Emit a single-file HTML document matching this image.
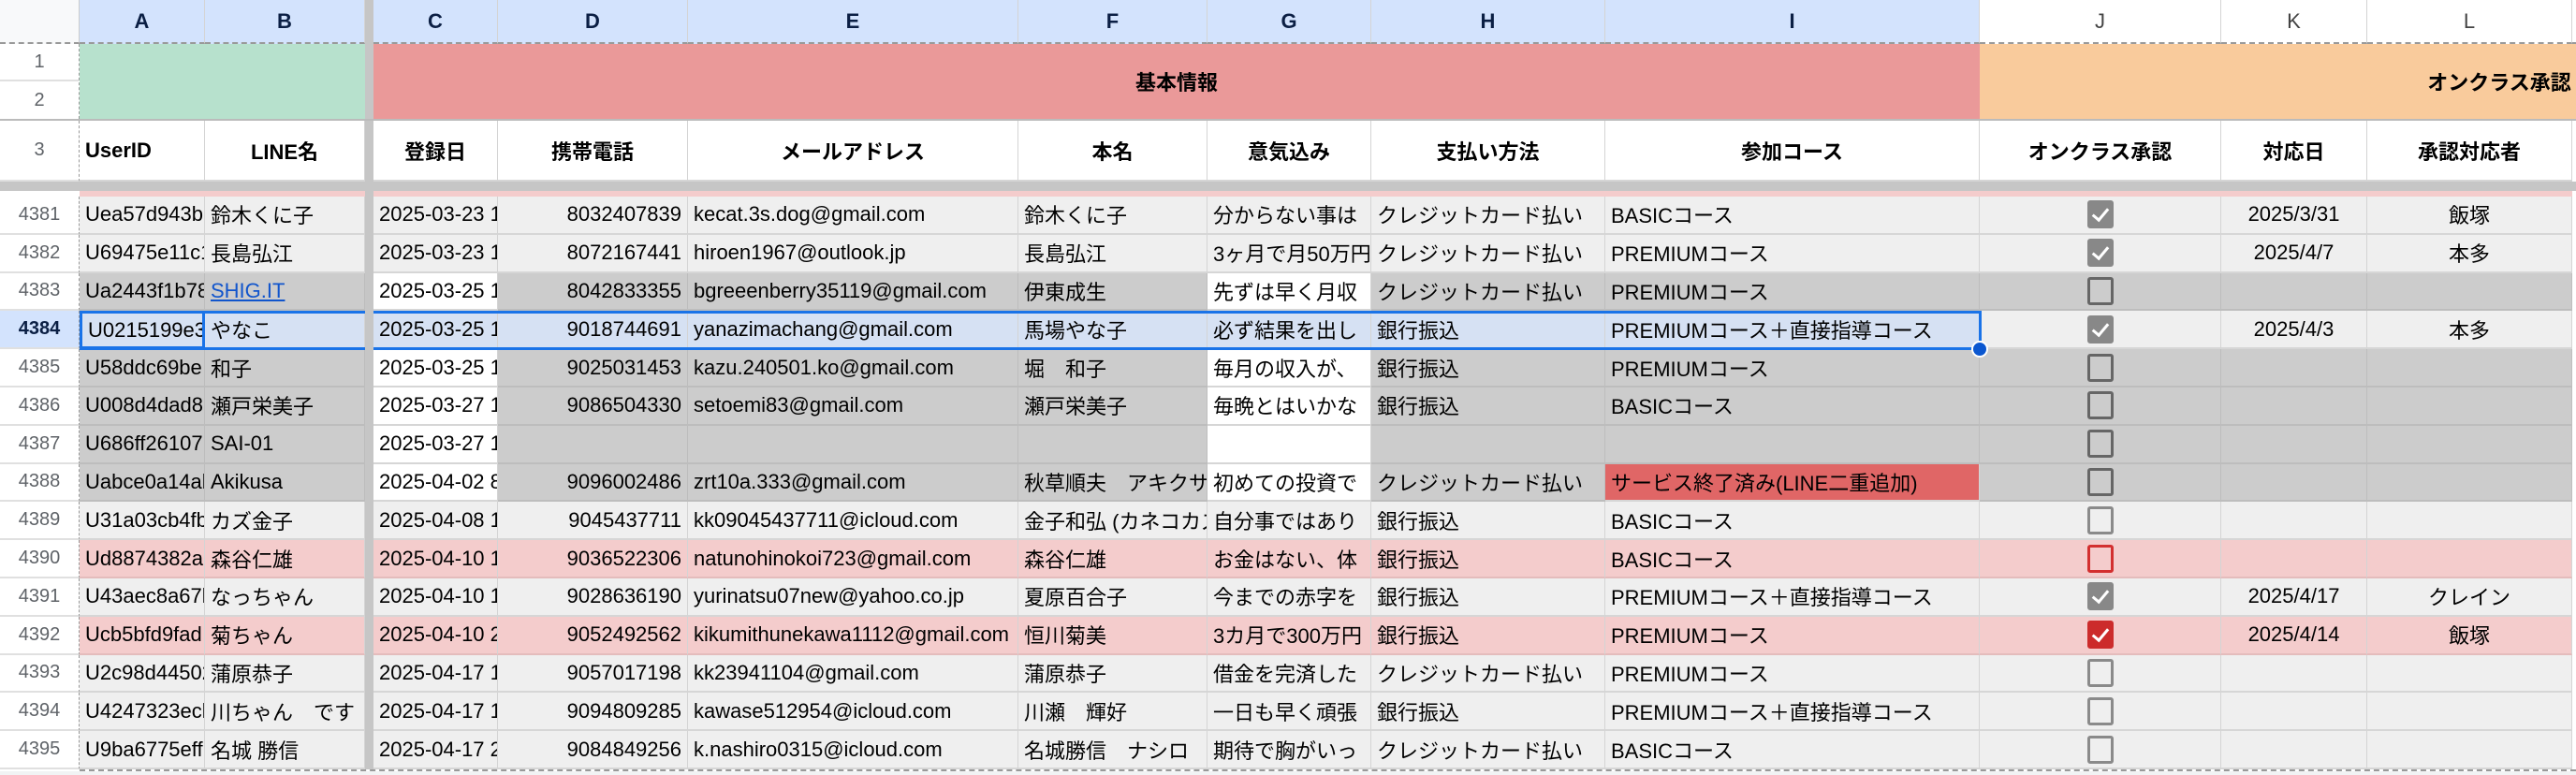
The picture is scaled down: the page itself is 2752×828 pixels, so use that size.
<!DOCTYPE html>
<html><head><meta charset="utf-8"><style>
*{box-sizing:border-box;margin:0;padding:0}
body{width:2752px;height:828px;overflow:hidden;background:#fff;font-family:"Liberation Sans","Noto Sans CJK JP",sans-serif;font-size:22px;color:#000;position:relative}
.r{position:absolute;left:0;width:2752px;display:grid;grid-template-columns:85px 134px 171px 9px 133px 203px 353px 202px 175px 250px 400px 258px 156px 219px 4px}
.r>div{overflow:hidden;white-space:nowrap;border-right:1px solid #d4d4d4;border-bottom:2px solid #d6d6d6;padding:0 6px;display:flex;align-items:center}
.r>div.n{justify-content:center;color:#5f6368;background:#fff;font-size:20px;border-right:1px dashed #999;border-bottom:2px solid #e0e0e0}
.r>div.fz{background:#c6c6c6;border:none;padding:0}
.r>div.e{background:#fff;border:none}
.w{background:#fff}.l{background:#efefef}.g{background:#cccccc;border-bottom-color:#bdbdbd!important;border-right-color:#bdbdbd!important}.p{background:#f4cccc;border-bottom-color:#e4bcbc!important}.s{background:#d6e1f3}.rd{background:#e06666}
.rt{justify-content:flex-end}.c{justify-content:center}
.d{height:40.8px}
.cb{width:28px;height:30px;border:3px solid #8a8a8a;border-radius:3px;margin:auto}
.g .cb{border-color:#666}
.cb.x{background:#888;border-color:#888;position:relative}
.cb.x::after{content:"";position:absolute;left:6px;top:2px;width:7px;height:14px;border:solid #fff;border-width:0 3px 3px 0;transform:rotate(40deg)}
.cb.red{border-color:#d32f2f}
.cb.rx{background:#cc2b2b;border-color:#cc2b2b;position:relative}
.cb.rx::after{content:"";position:absolute;left:6px;top:2px;width:7px;height:14px;border:solid #fff;border-width:0 3px 3px 0;transform:rotate(40deg)}
.hd>div{font-weight:bold;justify-content:center}
a{color:#1155cc;text-decoration:underline}
</style></head><body>

<!-- column letters -->
<div class="r" style="top:0;height:47px">
<div style="background:#f8f9fa;border-bottom:2px dashed #999;border-right:1px solid #ccc"></div>
<div class="c" style="background:#d3e3fd;font-weight:bold;color:#0b1f44;border-bottom:2px dashed #999">A</div>
<div class="c" style="background:#d3e3fd;font-weight:bold;color:#0b1f44;border-bottom:2px dashed #999">B</div>
<div class="fz"></div>
<div class="c" style="background:#d3e3fd;font-weight:bold;color:#0b1f44;border-bottom:2px dashed #999">C</div>
<div class="c" style="background:#d3e3fd;font-weight:bold;color:#0b1f44;border-bottom:2px dashed #999">D</div>
<div class="c" style="background:#d3e3fd;font-weight:bold;color:#0b1f44;border-bottom:2px dashed #999">E</div>
<div class="c" style="background:#d3e3fd;font-weight:bold;color:#0b1f44;border-bottom:2px dashed #999">F</div>
<div class="c" style="background:#d3e3fd;font-weight:bold;color:#0b1f44;border-bottom:2px dashed #999">G</div>
<div class="c" style="background:#d3e3fd;font-weight:bold;color:#0b1f44;border-bottom:2px dashed #999">H</div>
<div class="c" style="background:#d3e3fd;font-weight:bold;color:#0b1f44;border-bottom:2px dashed #999">I</div>
<div class="c" style="background:#fff;color:#444;border-bottom:2px dashed #999">J</div>
<div class="c" style="background:#fff;color:#444;border-bottom:2px dashed #999">K</div>
<div class="c" style="background:#fff;color:#444;border-bottom:2px dashed #999">L</div>
<div class="e" style="border-bottom:2px dashed #999"></div>
</div>

<!-- rows 1-2 -->
<div style="position:absolute;top:47px;left:0;width:85px;height:80px;background:#fff;border-right:1px dashed #999;color:#5f6368;font-size:20px">
<div style="height:40px;border-bottom:2px solid #e0e0e0;display:flex;align-items:center;justify-content:center">1</div>
<div style="height:40px;display:flex;align-items:center;justify-content:center">2</div></div>
<div style="position:absolute;top:47px;left:85px;width:305px;height:80px;background:#b7e1cd"></div>
<div style="position:absolute;top:47px;left:390px;width:9px;height:163px;background:#c6c6c6"></div>
<div style="position:absolute;top:47px;left:399px;width:1716px;height:80px;background:#ea9999;display:flex;align-items:center;justify-content:center;font-weight:bold">基本情報</div>
<div style="position:absolute;top:47px;left:2115px;width:637px;height:80px;background:#f9cb9c"></div>
<div style="position:absolute;top:47px;left:2530px;width:280px;height:80px;display:flex;align-items:center;justify-content:center;font-weight:bold">オンクラス承認</div>

<!-- row 3 -->
<div class="r hd" style="top:127px;height:67px;border-top:2px solid #bbb">
<div class="n" style="font-weight:normal">3</div><div class="w" style="justify-content:flex-start">UserID</div><div class="w">LINE名</div><div class="fz"></div><div class="w">登録日</div><div class="w">携帯電話</div><div class="w">メールアドレス</div><div class="w">本名</div><div class="w">意気込み</div><div class="w">支払い方法</div><div class="w">参加コース</div><div class="w">オンクラス承認</div><div class="w">対応日</div><div class="w">承認対応者</div><div class="e"></div>
</div>
<div style="position:absolute;top:194px;left:0;width:2752px;height:10px;background:#c6c6c6"></div>
<div style="position:absolute;top:204px;left:85px;width:2663px;height:6px;background:#f4cccc"></div>
<div style="position:absolute;top:204px;left:390px;width:9px;height:6px;background:#c6c6c6"></div>

<div style="position:absolute;top:210px;left:0;width:2752px">
<div class="r d" style="position:relative"><div class="n">4381</div><div class="l">Uea57d943b</div><div class="l">鈴木くに子</div><div class="fz"></div><div class="l">2025-03-23 1</div><div class="l rt">8032407839</div><div class="l">kecat.3s.dog@gmail.com</div><div class="l">鈴木くに子</div><div class="l">分からない事は</div><div class="l">クレジットカード払い</div><div class="l">BASICコース</div><div class="l"><span class="cb x"></span></div><div class="l c">2025/3/31</div><div class="l c">飯塚</div><div class="e"></div></div>
<div class="r d" style="position:relative"><div class="n">4382</div><div class="l">U69475e11c1</div><div class="l">長島弘江</div><div class="fz"></div><div class="l">2025-03-23 1</div><div class="l rt">8072167441</div><div class="l">hiroen1967@outlook.jp</div><div class="l">長島弘江</div><div class="l">3ヶ月で月50万円</div><div class="l">クレジットカード払い</div><div class="l">PREMIUMコース</div><div class="l"><span class="cb x"></span></div><div class="l c">2025/4/7</div><div class="l c">本多</div><div class="e"></div></div>
<div class="r d" style="position:relative"><div class="n">4383</div><div class="g">Ua2443f1b78</div><div class="g"><a>SHIG.IT</a></div><div class="fz"></div><div class="w">2025-03-25 1</div><div class="g rt">8042833355</div><div class="g">bgreeenberry35119@gmail.com</div><div class="g">伊東成生</div><div class="w">先ずは早く月収</div><div class="g">クレジットカード払い</div><div class="g">PREMIUMコース</div><div class="g"><span class="cb"></span></div><div class="g"></div><div class="g"></div><div class="e"></div></div>
<div class="r d" style="position:relative"><div class="n" style="background:#d3e3fd;color:#0b1f44;font-weight:bold">4384</div><div class="s" style="border:3px solid #1a73e8">U0215199e3</div><div class="s">やなこ</div><div class="fz"></div><div class="s">2025-03-25 1</div><div class="s rt">9018744691</div><div class="s">yanazimachang@gmail.com</div><div class="s">馬場やな子</div><div class="s">必ず結果を出し</div><div class="s">銀行振込</div><div class="s">PREMIUMコース＋直接指導コース</div><div class="l"><span class="cb x"></span></div><div class="l c">2025/4/3</div><div class="l c">本多</div><div class="e"></div></div>
<div class="r d" style="position:relative"><div class="n">4385</div><div class="g">U58ddc69be</div><div class="g">和子</div><div class="fz"></div><div class="w">2025-03-25 1</div><div class="g rt">9025031453</div><div class="g">kazu.240501.ko@gmail.com</div><div class="g">堀　和子</div><div class="w">毎月の収入が、</div><div class="g">銀行振込</div><div class="g">PREMIUMコース</div><div class="g"><span class="cb"></span></div><div class="g"></div><div class="g"></div><div class="e"></div></div>
<div class="r d" style="position:relative"><div class="n">4386</div><div class="g">U008d4dad8</div><div class="g">瀬戸栄美子</div><div class="fz"></div><div class="w">2025-03-27 1</div><div class="g rt">9086504330</div><div class="g">setoemi83@gmail.com</div><div class="g">瀬戸栄美子</div><div class="w">毎晩とはいかな</div><div class="g">銀行振込</div><div class="g">BASICコース</div><div class="g"><span class="cb"></span></div><div class="g"></div><div class="g"></div><div class="e"></div></div>
<div class="r d" style="position:relative"><div class="n">4387</div><div class="g">U686ff26107</div><div class="g">SAI-01</div><div class="fz"></div><div class="w">2025-03-27 1</div><div class="g"></div><div class="g"></div><div class="g"></div><div class="w"></div><div class="g"></div><div class="g"></div><div class="g"><span class="cb"></span></div><div class="g"></div><div class="g"></div><div class="e"></div></div>
<div class="r d" style="position:relative"><div class="n">4388</div><div class="g">Uabce0a14al</div><div class="g">Akikusa</div><div class="fz"></div><div class="w">2025-04-02 8</div><div class="g rt">9096002486</div><div class="g">zrt10a.333@gmail.com</div><div class="g">秋草順夫　アキクサ</div><div class="w">初めての投資で</div><div class="g">クレジットカード払い</div><div class="rd">サービス終了済み(LINE二重追加)</div><div class="g"><span class="cb"></span></div><div class="g"></div><div class="g"></div><div class="e"></div></div>
<div class="r d" style="position:relative"><div class="n">4389</div><div class="l">U31a03cb4fb</div><div class="l">カズ金子</div><div class="fz"></div><div class="l">2025-04-08 1</div><div class="l rt">9045437711</div><div class="l">kk09045437711@icloud.com</div><div class="l">金子和弘 (カネコカズ</div><div class="l">自分事ではあり</div><div class="l">銀行振込</div><div class="l">BASICコース</div><div class="l"><span class="cb"></span></div><div class="l"></div><div class="l"></div><div class="e"></div></div>
<div class="r d" style="position:relative"><div class="n">4390</div><div class="p">Ud8874382a</div><div class="p">森谷仁雄</div><div class="fz"></div><div class="p">2025-04-10 1</div><div class="p rt">9036522306</div><div class="p">natunohinokoi723@gmail.com</div><div class="p">森谷仁雄</div><div class="p">お金はない、体</div><div class="p">銀行振込</div><div class="p">BASICコース</div><div class="p"><span class="cb red"></span></div><div class="p"></div><div class="p"></div><div class="e"></div></div>
<div class="r d" style="position:relative"><div class="n">4391</div><div class="l">U43aec8a67l</div><div class="l">なっちゃん</div><div class="fz"></div><div class="l">2025-04-10 1</div><div class="l rt">9028636190</div><div class="l">yurinatsu07new@yahoo.co.jp</div><div class="l">夏原百合子</div><div class="l">今までの赤字を</div><div class="l">銀行振込</div><div class="l">PREMIUMコース＋直接指導コース</div><div class="l"><span class="cb x"></span></div><div class="l c">2025/4/17</div><div class="l c">クレイン</div><div class="e"></div></div>
<div class="r d" style="position:relative"><div class="n">4392</div><div class="p">Ucb5bfd9fad</div><div class="p">菊ちゃん</div><div class="fz"></div><div class="p">2025-04-10 2</div><div class="p rt">9052492562</div><div class="p">kikumithunekawa1112@gmail.com</div><div class="p">恒川菊美</div><div class="p">3カ月で300万円</div><div class="p">銀行振込</div><div class="p">PREMIUMコース</div><div class="p"><span class="cb rx"></span></div><div class="p c">2025/4/14</div><div class="p c">飯塚</div><div class="e"></div></div>
<div class="r d" style="position:relative"><div class="n">4393</div><div class="l">U2c98d44502</div><div class="l">蒲原恭子</div><div class="fz"></div><div class="l">2025-04-17 1</div><div class="l rt">9057017198</div><div class="l">kk23941104@gmail.com</div><div class="l">蒲原恭子</div><div class="l">借金を完済した</div><div class="l">クレジットカード払い</div><div class="l">PREMIUMコース</div><div class="l"><span class="cb"></span></div><div class="l"></div><div class="l"></div><div class="e"></div></div>
<div class="r d" style="position:relative"><div class="n">4394</div><div class="l">U4247323ecl</div><div class="l">川ちゃん　です</div><div class="fz"></div><div class="l">2025-04-17 1</div><div class="l rt">9094809285</div><div class="l">kawase512954@icloud.com</div><div class="l">川瀬　輝好</div><div class="l">一日も早く頑張</div><div class="l">銀行振込</div><div class="l">PREMIUMコース＋直接指導コース</div><div class="l"><span class="cb"></span></div><div class="l"></div><div class="l"></div><div class="e"></div></div>
<div class="r d" style="position:relative"><div class="n">4395</div><div class="l">U9ba6775eff</div><div class="l">名城 勝信</div><div class="fz"></div><div class="l">2025-04-17 2</div><div class="l rt">9084849256</div><div class="l">k.nashiro0315@icloud.com</div><div class="l">名城勝信　ナシロ</div><div class="l">期待で胸がいっ</div><div class="l">クレジットカード払い</div><div class="l">BASICコース</div><div class="l"><span class="cb"></span></div><div class="l"></div><div class="l"></div><div class="e"></div></div>
</div>

<!-- selection outline row 4384 -->
<div style="position:absolute;left:85px;top:332px;width:2032px;height:42px;border:3px solid #1a73e8;pointer-events:none"></div>
<div style="position:absolute;left:390px;top:332px;width:9px;height:42px;background:#c6c6c6"></div>
<div style="position:absolute;left:2106px;top:364px;width:18px;height:18px;border-radius:50%;background:#0b57d0;border:2px solid #fff"></div>
<!-- bottom dashed -->
<div style="position:absolute;left:85px;top:822px;width:2667px;height:0;border-top:2px dashed #999"></div>
<div style="position:absolute;left:0;top:824px;width:2752px;height:4px;background:#f1f3f4"></div>
</body></html>
